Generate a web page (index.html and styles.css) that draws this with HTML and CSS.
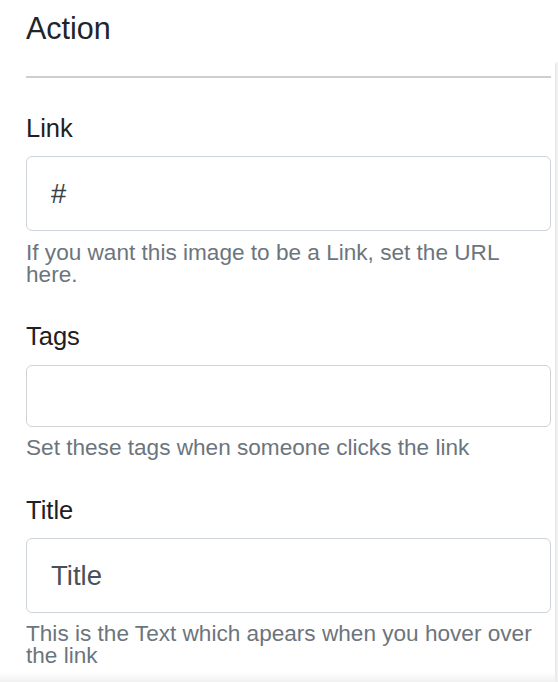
FILE: index.html
```html
<!DOCTYPE html>
<html>
<head>
<meta charset="utf-8">
<link rel="stylesheet" href="styles.css">
</head>
<body>
<div class="panel">
  <h2 class="heading">Action</h2>
  <hr class="rule">
  <div class="group group-link">
    <label class="label">Link</label>
    <div class="input input-tall"><span class="value">#</span></div>
    <p class="help">If you want this image to be a Link, set the URL here.</p>
  </div>
  <div class="group group-tags">
    <label class="label">Tags</label>
    <div class="input input-tags"></div>
    <p class="help">Set these tags when someone clicks the link</p>
  </div>
  <div class="group group-title">
    <label class="label">Title</label>
    <div class="input input-tall"><span class="value value-title">Title</span></div>
    <p class="help">This is the Text which apears when you hover over the link</p>
  </div>
</div>
<div class="scroll-shadow"></div>
<div class="bottom-fade"></div>
</body>
</html>
```
FILE: styles.css
```css
html, body {
  margin: 0;
  padding: 0;
  background: #ffffff;
  height: 100%;
  overflow: hidden;
}
body {
  font-family: "Liberation Sans", Arial, sans-serif;
  color: #212529;
}
.panel {
  padding: 10px 7px 0 26px;
}
.heading {
  margin: 0;
  font-size: 30.5px;
  line-height: 36px;
  font-weight: 400;
  color: #212529;
}
.rule {
  margin: 30px 0 0 0;
  border: 0;
  height: 2px;
  background: #cfcfcf;
}
.group {
  display: flex;
  flex-direction: column;
}
.group-link { margin-top: 35px; }
.group-tags { margin-top: 35px; }
.group-title { margin-top: 36px; }
.label {
  font-size: 25.5px;
  line-height: 30px;
  color: #1d2024;
}
.input {
  box-sizing: border-box;
  border: 1px solid #ced4da;
  border-radius: 6px;
  display: flex;
  align-items: center;
  padding-left: 24px;
  background: #fff;
}
.input-tall {
  height: 75px;
  margin-top: 13px;
}
.input-tags {
  height: 62px;
  margin-top: 14px;
  border-color: #d0d3d6;
}
.value {
  font-size: 27.5px;
  color: #3a4046;
}
.value-title {
  color: #495057;
}
.help {
  margin: 11px 0 0 0;
  font-size: 22.6px;
  line-height: 22px;
  color: #6c757d;
}
.group-tags .help { margin-top: 10px; }
.group-title .help { margin-top: 10px; }
.scroll-shadow {
  position: fixed;
  top: 62px;
  right: 0;
  width: 3px;
  bottom: 0;
  border-radius: 3px 0 0 0;
  background: linear-gradient(to right, #e6e6e6, #f4f4f4);
}
.bottom-fade {
  position: fixed;
  left: 0;
  right: 0;
  bottom: 0;
  height: 10px;
  background: linear-gradient(to bottom, rgba(240,240,240,0), rgba(238,238,238,0.8));
}
```
